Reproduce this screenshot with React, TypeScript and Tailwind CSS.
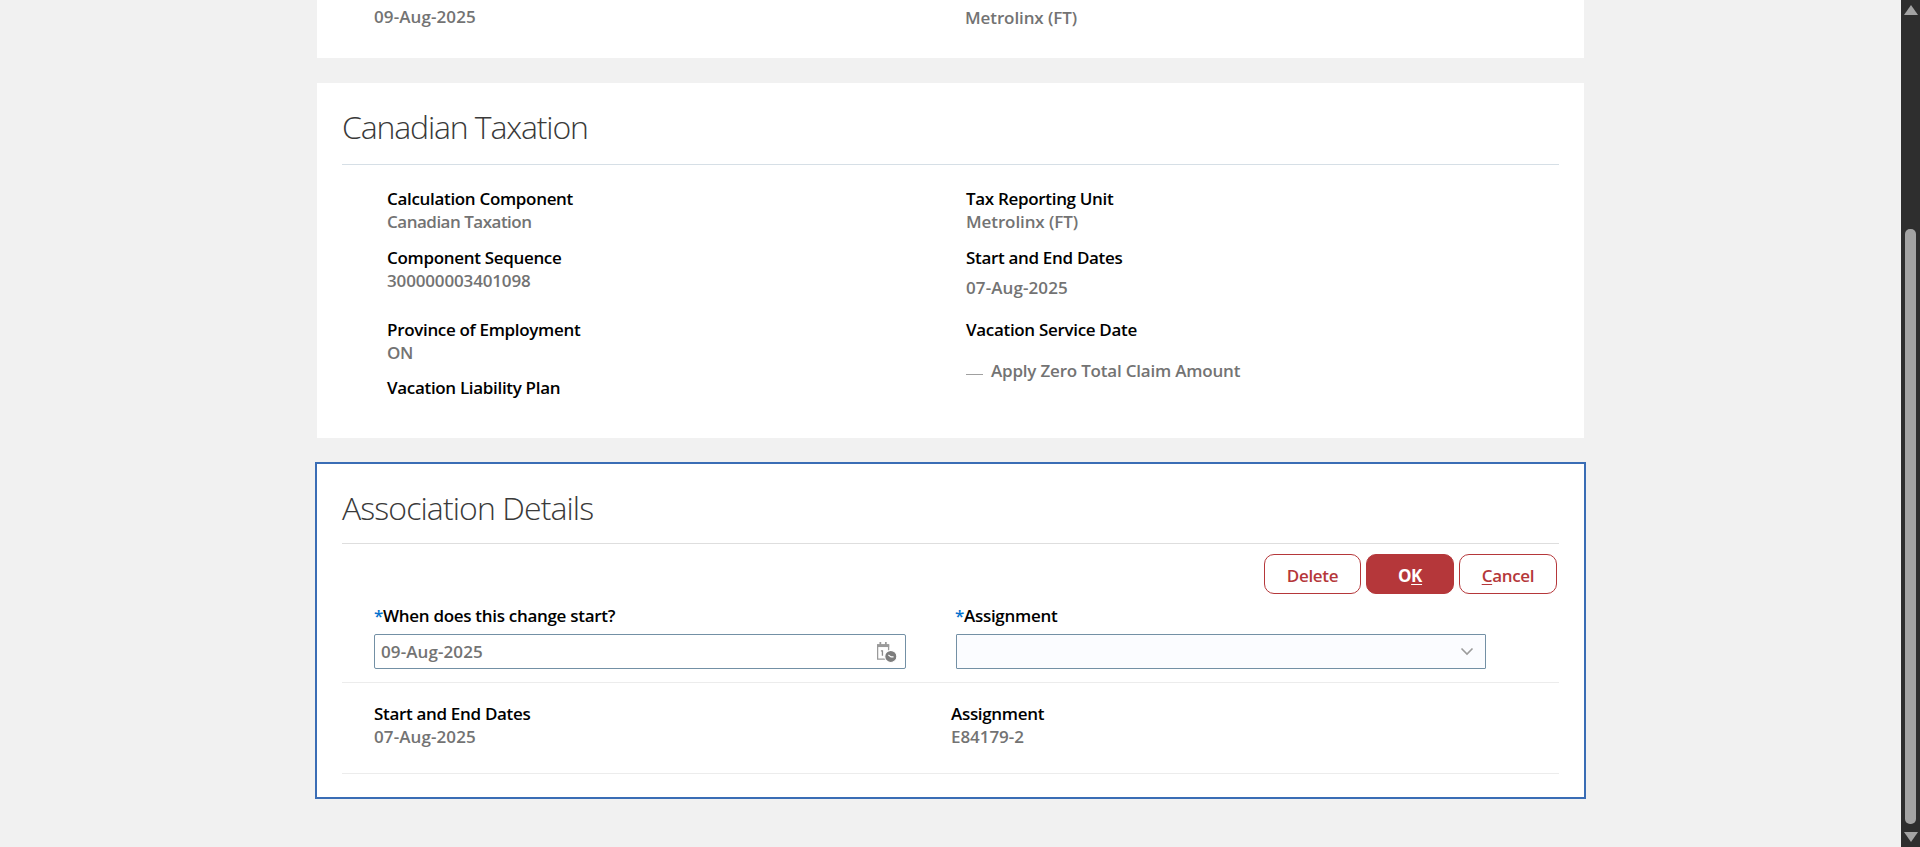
const font = { fontFamily: '"Open Sans", sans-serif' };

function Field({ label, value, className = "", valueClass = "tracking-[-0.35px]" }: { label: string; value?: string; className?: string; valueClass?: string }) {
  return (
    <div className={className}>
      <div className="text-[17px] leading-[23px] font-semibold text-black tracking-[-0.32px]">{label}</div>
      {value && <div className={`text-[17px] leading-[23px] font-semibold text-[#737373] ${valueClass}`}>{value}</div>}
    </div>
  );
}

function CalendarIcon() {
  return (
    <svg width="21" height="22" viewBox="2 1 19 20" className="shrink-0">
      <path d="M2.500 4.500h10v13h-10z" fill="none" stroke="#9a9a9a" strokeWidth="1.200" />
      <path d="M2 4h11v2.500H2z" fill="#9a9a9a" />
      <path d="M5 2v3M10 2v3" stroke="#9a9a9a" strokeWidth="1.600" />
      <path d="M5.500 10h1.400v4.500" fill="none" stroke="#8c8c8c" strokeWidth="1.200" />
      <circle cx="14.500" cy="15" r="5.500" fill="#7d7d7d" stroke="#fff" strokeWidth="1" />
      <path d="M12.300 13.800l2.400 1.600h2.300" fill="none" stroke="#fff" strokeWidth="1" />
    </svg>
  );
}

export default function App() {
  return (
    <div className="flex h-[847px] w-full overflow-hidden bg-[#f1f1f1]" style={font}>
      <main className="flex-1 min-w-0 pl-[315px]">
        <div className="w-[1271px] flex flex-col">
          <section className="ml-[2px] w-[1267px] h-[58px] bg-white overflow-hidden flex pl-[57px] pt-[6px]">
            <div className="-mt-[1px] w-[591px] text-[17px] leading-[23px] font-semibold text-[#737373] tracking-[0.1px]">09-Aug-2025</div>
            <div className="text-[17px] leading-[23px] font-semibold text-[#737373] tracking-[-0.1px]">Metrolinx (FT)</div>
          </section>

          <section className="ml-[2px] mt-[25px] w-[1267px] h-[355px] bg-white px-[25px]">
            <h2 className="h-[82px] border-b border-[#d6dfe6] pt-[22px] text-[32px] leading-[44px] font-light text-[#3a3a3a] tracking-[-1.15px]">Canadian Taxation</h2>
            <div className="grid grid-cols-[579px_1fr] pl-[45px] pt-[22px]">
              <Field label="Calculation Component" value="Canadian Taxation" className="h-[59px]" valueClass="tracking-[-0.5px]" />
              <Field label="Tax Reporting Unit" value="Metrolinx (FT)" className="h-[59px]" valueClass="tracking-[-0.1px]" />
              <Field label="Component Sequence" value="300000003401098" className="h-[72px]" valueClass="tracking-[-0.15px]" />
              <div className="h-[72px]">
                <div className="text-[17px] leading-[23px] font-semibold text-black tracking-[-0.32px]">Start and End Dates</div>
                <div className="mt-[7px] text-[17px] leading-[23px] font-semibold text-[#737373] tracking-[0.1px]">07-Aug-2025</div>
              </div>
              <Field label="Province of Employment" value="ON" className="h-[58px]" />
              <div className="row-span-2">
                <Field label="Vacation Service Date" />
                <div className="mt-[18px] flex items-center gap-[8px] text-[17px] leading-[23px] font-semibold text-[#737373] tracking-[-0.2px]">
                  <span className="mt-[8px] h-px w-[17px] bg-[#a0a0a0]" />
                  Apply Zero Total Claim Amount
                </div>
              </div>
              <Field label="Vacation Liability Plan" />
            </div>
          </section>

          <section className="mt-[24px] w-[1271px] h-[337px] bg-white border-2 border-[#3a6db5] px-[25px]">
            <h2 className="h-[80px] border-b border-[#dedede] pt-[22px] text-[32px] leading-[44px] font-light text-[#3a3a3a] tracking-[-0.9px]">Association Details</h2>
            <div className="flex justify-end gap-[5px] pr-[2px] pt-[10px]">
              <button className="h-[40px] w-[97px] rounded-[10px] border border-[#b5373a] bg-white pt-[3px] text-[17px] font-semibold text-[#b5373a] tracking-[-0.3px]">Delete</button>
              <button className="h-[40px] w-[88px] rounded-[10px] border border-[#b5373a] bg-[#b5373a] pt-[3px] text-[17px] font-bold text-white tracking-[-0.35px]">O<span className="underline underline-offset-2">K</span></button>
              <button className="h-[40px] w-[98px] rounded-[10px] border border-[#b5373a] bg-white pt-[3px] text-[17px] font-semibold text-[#b5373a] tracking-[-0.3px]"><span className="underline underline-offset-2">C</span>ancel</button>
            </div>
            <div className="flex h-[89px] border-b border-[#ececec] pl-[32px] pt-[10px]">
              <div className="w-[582px]">
                <div className="text-[17px] leading-[23px] font-semibold text-black tracking-[-0.3px]"><span className="text-[#0572ce]">*</span>When does this change start?</div>
                <div className="mt-[7px] flex h-[35px] w-[532px] items-center justify-between rounded-[2px] border border-[#7390a5] pl-[6px] pr-[7px] text-[17px] font-semibold text-[#737373] tracking-[0.1px]">
                  09-Aug-2025
                  <CalendarIcon />
                </div>
              </div>
              <div>
                <div className="-ml-[1px] text-[17px] leading-[23px] font-semibold text-black tracking-[-0.3px]"><span className="text-[#0572ce]">*</span>Assignment</div>
                <div className="mt-[7px] flex h-[35px] w-[530px] items-center justify-end rounded-[1px] border border-[#7390a5] bg-[#fbfcff] pr-[11px]">
                  <svg width="14" height="9" viewBox="0 0 14 9"><path d="M1.500 1.500L7 7l5.500-5.500" fill="none" stroke="#9b9b9b" strokeWidth="1.600" /></svg>
                </div>
              </div>
            </div>
            <div className="flex h-[91px] border-b border-[#ececec] pl-[32px] pt-[19px]">
              <Field label="Start and End Dates" value="07-Aug-2025" className="w-[577px]" valueClass="tracking-[0.1px]" />
              <Field label="Assignment" value="E84179-2" valueClass="tracking-[-0.05px]" />
            </div>
          </section>
        </div>
      </main>

      <aside className="relative w-[19px] shrink-0 bg-[#2e2e2e] flex flex-col items-center justify-between py-[5px]">
        <div className="h-0 w-0 border-x-[7px] border-b-[10px] border-x-transparent border-b-[#a3a3a3]" />
        <div className="absolute left-[4px] top-[229px] h-[595px] w-[11px] rounded-[5px] bg-[#a3a3a3]" />
        <div className="h-0 w-0 border-x-[7px] border-t-[10px] border-x-transparent border-t-[#a3a3a3]" />
      </aside>
    </div>
  );
}
